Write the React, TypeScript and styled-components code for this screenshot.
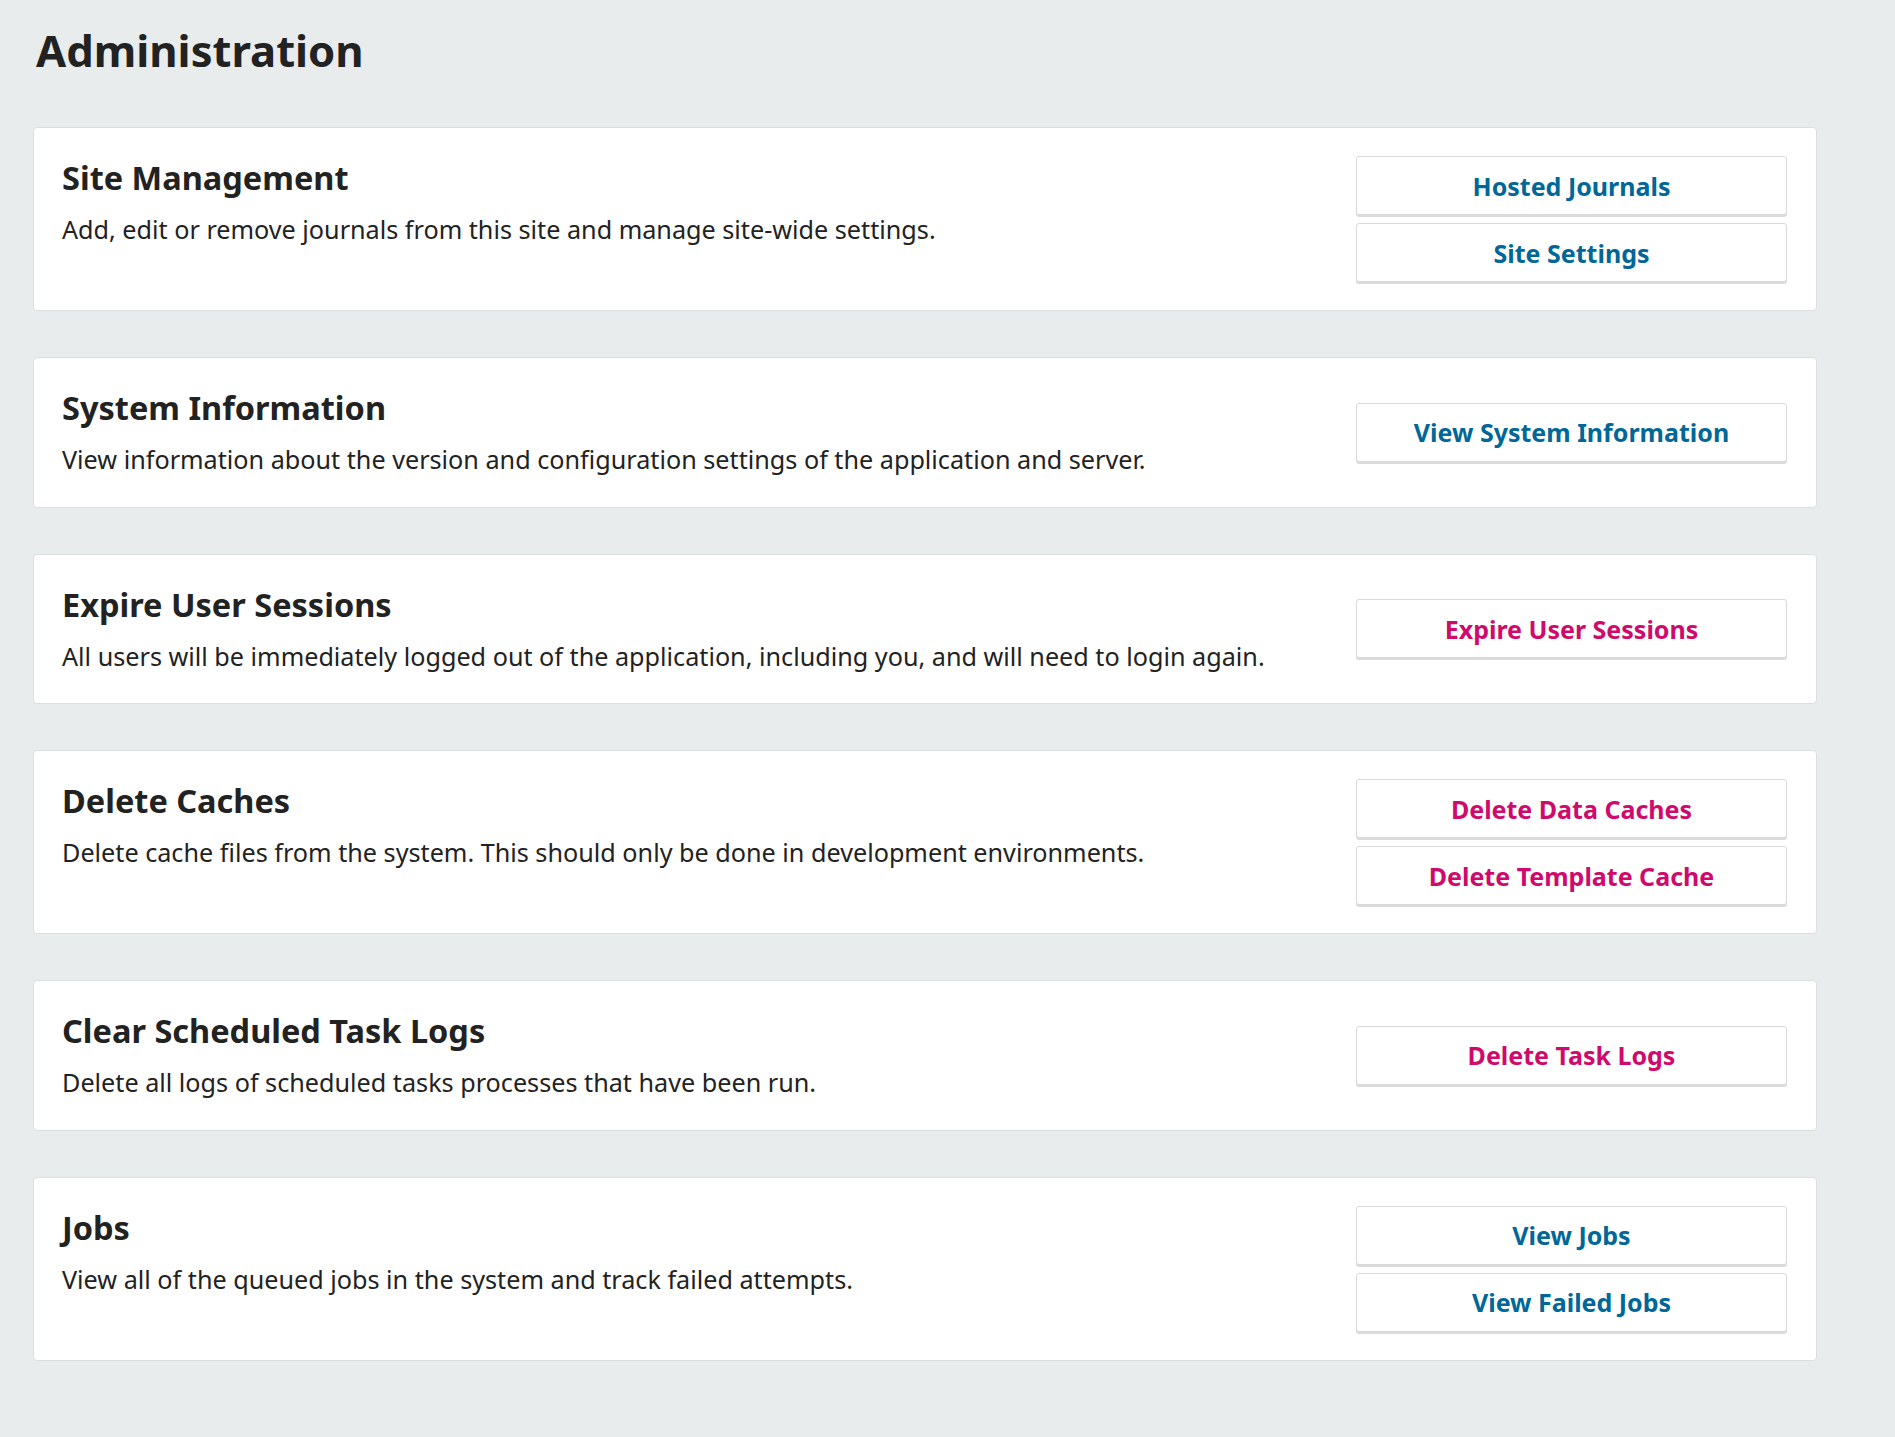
import React from 'react';
import styled, { createGlobalStyle } from 'styled-components';

type Tone = 'primary' | 'danger';

interface IAction {
  label: string;
  tone: Tone;
}

interface ISection {
  title: string;
  description: string;
  actions: IAction[];
}

const sections: ISection[] = [
  {
    title: 'Site Management',
    description: 'Add, edit or remove journals from this site and manage site-wide settings.',
    actions: [
      { label: 'Hosted Journals', tone: 'primary' },
      { label: 'Site Settings', tone: 'primary' },
    ],
  },
  {
    title: 'System Information',
    description:
      'View information about the version and configuration settings of the application and server.',
    actions: [{ label: 'View System Information', tone: 'primary' }],
  },
  {
    title: 'Expire User Sessions',
    description:
      'All users will be immediately logged out of the application, including you, and will need to login again.',
    actions: [{ label: 'Expire User Sessions', tone: 'danger' }],
  },
  {
    title: 'Delete Caches',
    description:
      'Delete cache files from the system. This should only be done in development environments.',
    actions: [
      { label: 'Delete Data Caches', tone: 'danger' },
      { label: 'Delete Template Cache', tone: 'danger' },
    ],
  },
  {
    title: 'Clear Scheduled Task Logs',
    description: 'Delete all logs of scheduled tasks processes that have been run.',
    actions: [{ label: 'Delete Task Logs', tone: 'danger' }],
  },
  {
    title: 'Jobs',
    description: 'View all of the queued jobs in the system and track failed attempts.',
    actions: [
      { label: 'View Jobs', tone: 'primary' },
      { label: 'View Failed Jobs', tone: 'primary' },
    ],
  },
];

const toneColor: Record<Tone, string> = {
  primary: '#006798',
  danger: '#d00a6c',
};

const GlobalStyle = createGlobalStyle`
  html, body {
    margin: 0;
    padding: 0;
    background: #e9eced;
  }

  body {
    font-family: 'Noto Sans', 'Open Sans', sans-serif;
    color: #222;
  }
`;

const Page = styled.main`
  min-height: 1437px;
  padding: 23px 0 78px 33px;
  box-sizing: border-box;
`;

const Heading = styled.h1`
  margin: 0 0 50px 3px;
  font-size: 43.6px;
  line-height: 54px;
  font-weight: 700;
  color: #222;
`;

const List = styled.div`
  width: 1784px;
  display: flex;
  flex-direction: column;
  gap: 46px;
`;

const Card = styled.section`
  display: flex;
  align-items: flex-start;
  justify-content: space-between;
  gap: 40px;
  padding: 28px 29px 26px 28px;
  background: #fff;
  border: 1px solid #dcdfe1;
  border-radius: 4px;
  box-sizing: border-box;
`;

const Text = styled.div`
  flex: 1;
  min-width: 0;
  padding-top: 2px;
`;

const Title = styled.h2`
  margin: 0 0 13px;
  font-size: 32.5px;
  line-height: 40px;
  font-weight: 700;
  color: #222;
`;

const Description = styled.p`
  margin: 0 0 2px;
  font-size: 25.2px;
  line-height: 37.5px;
  color: #222;
`;

const Actions = styled.div`
  align-self: center;
  display: flex;
  flex-direction: column;
  gap: 6px;
  width: 431px;
  flex-shrink: 0;
`;

const ActionButton = styled.button<{ $tone: Tone }>`
  height: 59px;
  margin-bottom: 2px;
  padding: 0 16px;
  background: #fff;
  border: 1px solid #d9d9d9;
  border-radius: 3px;
  box-shadow: 0 2px 0 #dcdcdc;
  font-family: 'Noto Sans', 'Open Sans', sans-serif;
  font-size: 25px;
  font-weight: 700;
  color: ${({ $tone }) => toneColor[$tone]};
  cursor: pointer;
`;

export default function App() {
  return (
    <>
      <GlobalStyle />
      <Page>
        <Heading>Administration</Heading>
        <List>
          {sections.map((section) => (
            <Card key={section.title}>
              <Text>
                <Title>{section.title}</Title>
                <Description>{section.description}</Description>
              </Text>
              <Actions>
                {section.actions.map((action) => (
                  <ActionButton key={action.label} $tone={action.tone}>
                    {action.label}
                  </ActionButton>
                ))}
              </Actions>
            </Card>
          ))}
        </List>
      </Page>
    </>
  );
}
